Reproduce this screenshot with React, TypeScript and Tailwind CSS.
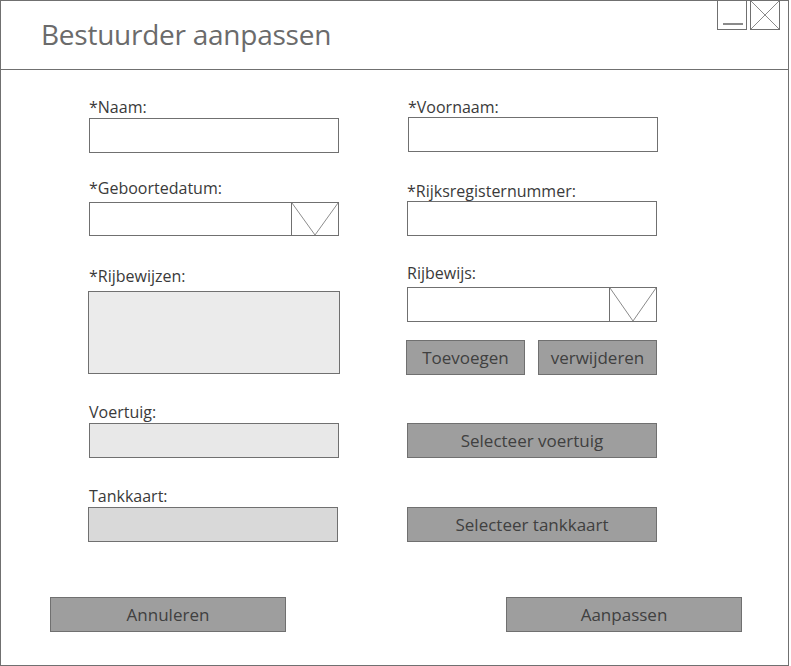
import React from 'react'

const font = { fontFamily: '"Open Sans", "Liberation Sans", sans-serif' }

function Label({ text, className }: { text: string; className: string }) {
  return <div className={`h-[20px] text-[16px] leading-[20px] text-[#3a3a3a] whitespace-nowrap ${className}`}>{text}</div>
}

function Dropdown({ className }: { className: string }) {
  return (
    <div className={`flex h-[35px] w-[250px] border border-[#707070] bg-white ${className}`}>
      <div className="flex-1" />
      <div className="relative w-[47px] border-l border-[#707070]">
        <svg className="absolute inset-0 h-full w-full" viewBox="0 0 46 33" preserveAspectRatio="none">
          <path d="M0 0 L23 33 L46 0" fill="none" stroke="#8a8a8a" strokeWidth="1" />
        </svg>
      </div>
    </div>
  )
}

function Btn({ text, className }: { text: string; className: string }) {
  return (
    <div className={`flex h-[35px] items-center justify-center border border-[#707070] bg-[#9e9e9e] text-[17px] text-[#404040] ${className}`}>
      {text}
    </div>
  )
}

export default function App() {
  return (
    <div className="h-[666px] w-[791px] bg-white" style={font}>
      <div className="flex h-[666px] w-[789px] flex-col border border-[#707070] bg-white">
        {/* Title bar */}
        <div className="relative h-[69px] border-b border-[#707070]">
          <div className="pl-[40px] pt-[14px] text-[28px] leading-[38px] tracking-[-0.25px] text-[#6b6b6b]">Bestuurder aanpassen</div>
          <div className="absolute right-[8px] top-[-1px] flex gap-[3px]">
            <div className="relative h-[30px] w-[30px] border border-[#707070]">
              <div className="absolute left-[5px] top-[22px] h-[2px] w-[20px] bg-[#8a8a8a]" />
            </div>
            <div className="relative h-[30px] w-[30px] border border-[#707070]">
              <svg className="absolute inset-0 h-full w-full" viewBox="0 0 28 28">
                <path d="M0 0 L28 28 M28 0 L0 28" stroke="#8a8a8a" strokeWidth="1" fill="none" />
              </svg>
            </div>
          </div>
        </div>

        {/* Form */}
        <div className="flex">
          <div className="ml-[88px] flex w-[252px] flex-col">
            <Label text="*Naam:" className="mt-[27px]" />
            <div className="mt-[1px] h-[35px] w-[250px] border border-[#707070] bg-white" />
            <Label text="*Geboortedatum:" className="mt-[25px]" />
            <Dropdown className="mt-[4px] !h-[34px]" />
            <Label text="*Rijbewijzen:" className="mt-[30px]" />
            <div className="mt-[5px] h-[83px] w-[252px] -ml-[1px] border border-[#707070] bg-[#ebebeb]" />
            <Label text="Voertuig:" className="mt-[28px]" />
            <div className="mt-[1px] h-[35px] w-[250px] border border-[#707070] bg-[#e8e8e8]" />
            <Label text="Tankkaart:" className="mt-[28px]" />
            <div className="mt-[1px] h-[35px] w-[250px] -ml-[1px] border border-[#707070] bg-[#d9d9d9]" />
          </div>

          <div className="ml-[66px] flex w-[251px] flex-col">
            <Label text="*Voornaam:" className="mt-[27px] ml-[1px]" />
            <div className="h-[35px] w-[250px] ml-[1px] border border-[#707070] bg-white" />
            <Label text="*Rijksregisternummer:" className="mt-[29px]" />
            <div className="h-[35px] w-[250px] border border-[#707070] bg-white" />
            <Label text="Rijbewijs:" className="mt-[27px]" />
            <Dropdown className="mt-[4px]" />
            <div className="mt-[18px] flex gap-[13px] -ml-[1px]">
              <Btn text="Toevoegen" className="w-[119px]" />
              <Btn text="verwijderen" className="w-[119px]" />
            </div>
            <Btn text="Selecteer voertuig" className="mt-[48px] w-[250px]" />
            <Btn text="Selecteer tankkaart" className="mt-[49px] w-[250px]" />
          </div>
        </div>

        {/* Actions */}
        <div className="mt-[55px] flex gap-[220px] pl-[49px]">
          <Btn text="Annuleren" className="w-[236px]" />
          <Btn text="Aanpassen" className="w-[236px]" />
        </div>
      </div>
    </div>
  )
}
